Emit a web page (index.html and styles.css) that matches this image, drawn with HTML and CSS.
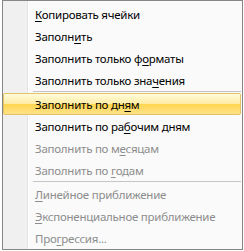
FILE: index.html
```html
<!DOCTYPE html>
<html>
<head>
  <meta charset="utf-8">
  <title>Параметры автозаполнения</title>
  <link rel="stylesheet" href="styles.css">
</head>
<body>
  <div class="menu">
    <div class="item"><span class="label"><u>К</u>опировать ячейки</span></div>
    <div class="item"><span class="label">Заполн<u>и</u>ть</span></div>
    <div class="item"><span class="label">Заполнить только ф<u>о</u>рматы</span></div>
    <div class="item"><span class="label">Заполнить только зна<u>ч</u>ения</span></div>
    <div class="separator"></div>
    <div class="item active"><span class="label">Заполнить по дн<u>я</u>м</span></div>
    <div class="item"><span class="label">Заполнить по ра<u>б</u>очим дням</span></div>
    <div class="item disabled"><span class="label">Заполнить по м<u>е</u>сяцам</span></div>
    <div class="item disabled"><span class="label">Заполнить по <u>г</u>одам</span></div>
    <div class="separator"></div>
    <div class="item disabled"><span class="label"><u>Л</u>инейное приближение</span></div>
    <div class="item disabled"><span class="label"><u>Э</u>кспоненциальное приближение</span></div>
    <div class="item disabled"><span class="label">Про<u>г</u>рессия...</span></div>
  </div>
</body>
</html>
```

FILE: styles.css
```css
body {
  margin: 0;
  background: #fff;
  font-family: 'Noto Sans', 'Open Sans', sans-serif;
  font-size: 11.5px;
  letter-spacing: -0.25px;
}

.menu {
  box-sizing: border-box;
  width: 241px;
  height: 250px;
  margin-left: 2px;
  padding-top: 2px;
  border: 1px solid #868686;
  background: linear-gradient(to right, #f0f0f0 0 24px, #e2e3e3 24px 25px, #fff 25px 26px, #fafafa 26px);
  display: flex;
  flex-direction: column;
}

.item {
  box-sizing: border-box;
  height: 22px;
  margin-right: 1px;
  display: flex;
  align-items: center;
  padding-left: 32px;
  color: #000;
  white-space: nowrap;
}

.item u {
  text-underline-offset: 2px;
}

.disabled {
  color: #8d8d8d;
}

.active {
  border: 1px solid #e5c365;
  border-radius: 2px;
  padding-left: 31px;
  background: linear-gradient(#fffbdb, #ffeda6 48%, #ffd64f 52%, #ffe28a);
}

.separator {
  height: 1px;
  margin: 0 1px 1px 30px;
  background: #c5c5c5;
}
```
